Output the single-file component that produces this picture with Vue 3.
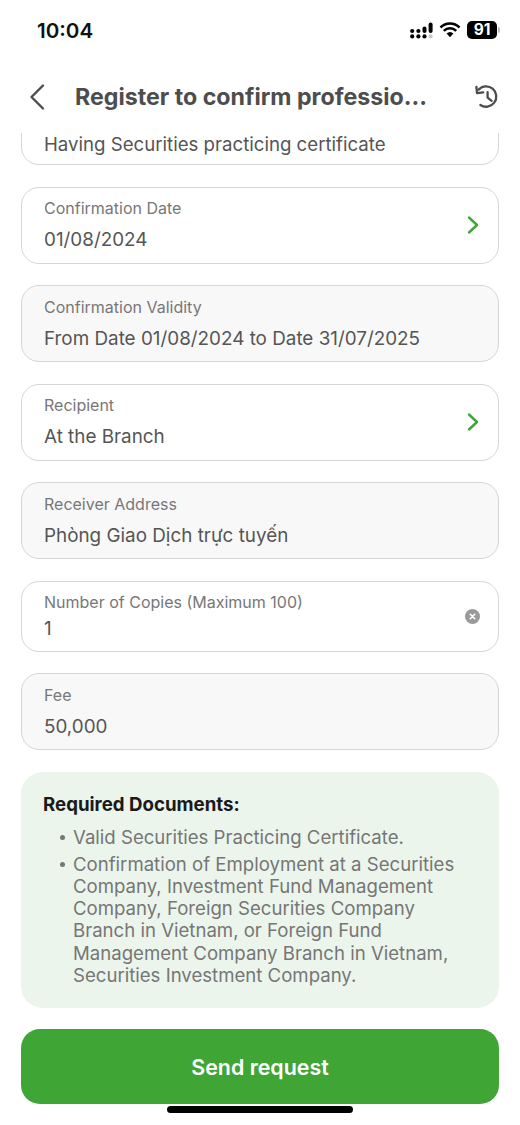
<script setup>
const fields = [
  { value: 'Having Securities practicing certificate', arrow: true, scrolled: true },
  { label: 'Confirmation Date', value: '01/08/2024', arrow: true },
  { label: 'Confirmation Validity', value: 'From Date 01/08/2024 to Date 31/07/2025', readonly: true },
  { label: 'Recipient', value: 'At the Branch', arrow: true },
  { label: 'Receiver Address', value: 'Phòng Giao Dịch trực tuyến', readonly: true },
  { label: 'Number of Copies (Maximum 100)', value: '1', clear: true, compact: true },
  { label: 'Fee', value: '50,000', readonly: true },
]
</script>

<template>
  <div class="screen">
    <div class="status">
      <span class="time">10:04</span>
      <div class="status-icons">
        <svg width="23" height="17" viewBox="0 0 23 17">
          <g fill="#000">
            <circle cx="2.2" cy="9" r="2.1" /><circle cx="2.2" cy="14.4" r="2.1" />
            <circle cx="8.4" cy="9" r="2.1" /><circle cx="8.4" cy="14.4" r="2.1" />
            <rect x="12.5" y="4.6" width="4" height="6.4" rx="2" /><circle cx="14.5" cy="14.4" r="2.1" />
            <rect x="18.6" y="0.4" width="4" height="10.6" rx="2" />
          </g>
          <circle cx="20.6" cy="14.4" r="2.1" fill="#c8c8c8" />
        </svg>
        <svg width="22" height="16" viewBox="0 0 22 16">
          <path d="M1.5 5.5a13.5 13.5 0 0 1 19 0M4.8 8.9a8.8 8.8 0 0 1 12.4 0" fill="none" stroke="#000" stroke-width="2.5" />
          <path d="M7.6 11.6a4.6 4.6 0 0 1 6.8 0L11 15.2z" fill="#000" />
        </svg>
        <div class="battery"><span>91</span></div>
        <i class="battery-cap"></i>
      </div>
    </div>

    <header class="nav">
      <button type="button" class="nav-btn" aria-label="Back">
        <svg width="18" height="28" viewBox="0 0 18 28">
          <path d="M15 2.5 3.5 14 15 25.5" fill="none" stroke="#4d4d4d" stroke-width="2.4" stroke-linecap="round" stroke-linejoin="round" />
        </svg>
      </button>
      <h1 class="nav-title">Register to confirm professio...</h1>
      <button type="button" class="nav-btn" aria-label="History">
        <svg width="26" height="26" viewBox="0 0 26 26">
          <g fill="none" stroke="#4d4d4d" stroke-width="2.3" stroke-linecap="round" stroke-linejoin="round">
            <path d="M4.6 5.6A10.2 10.2 0 1 1 6.4 21" />
            <path d="M2.4 2.8 3 9.2l6.2-.9" />
            <path d="M13.6 8.2v5.4l4 3.2" />
          </g>
        </svg>
      </button>
    </header>

    <main class="content">
      <div class="form">
        <div
          v-for="f in fields"
          :key="f.value"
          class="field"
          :class="{ 'is-readonly': f.readonly, 'is-compact': f.compact, 'is-scrolled': f.scrolled }"
        >
          <div class="field-text">
            <div v-if="f.label" class="field-label">{{ f.label }}</div>
            <div class="field-value">{{ f.value }}</div>
          </div>
          <svg v-if="f.arrow" class="chevron" width="14" height="20" viewBox="0 0 14 20">
            <path d="M3 2.5 11 10l-8 7.5" fill="none" stroke="#3fa535" stroke-width="2.4" stroke-linecap="round" stroke-linejoin="round" />
          </svg>
          <svg v-if="f.clear" class="clear" width="15" height="15" viewBox="0 0 15 15">
            <circle cx="7.5" cy="7.5" r="7.5" fill="#9a9a9a" />
            <path d="M5.3 5.3l4.4 4.4m0-4.4-4.4 4.4" stroke="#fff" stroke-width="1.6" stroke-linecap="round" />
          </svg>
        </div>

        <section class="docs">
          <h2 class="docs-title">Required Documents:</h2>
          <ul class="docs-list">
            <li>Valid Securities Practicing Certificate.</li>
            <li>Confirmation of Employment at a Securities Company, Investment Fund Management Company, Foreign Securities Company Branch in Vietnam, or Foreign Fund Management Company Branch in Vietnam, Securities Investment Company.</li>
          </ul>
        </section>

        <button type="button" class="send">Send request</button>
      </div>
    </main>

    <div class="home-bar"></div>
  </div>
</template>

<style>
html,
body {
  margin: 0;
  background: #fff;
}
</style>

<style scoped>
.screen {
  position: relative;
  width: 520px;
  height: 1125px;
  display: flex;
  flex-direction: column;
  overflow: hidden;
  background: #fff;
  font-family: Inter, 'Liberation Sans', sans-serif;
}

.status {
  height: 60px;
  flex: none;
  display: flex;
  align-items: center;
  justify-content: space-between;
  padding: 0 20px 0 37px;
  box-sizing: border-box;
}

.time {
  font-size: 20.6px;
  font-weight: 600;
  color: #111;
}

.status-icons {
  display: flex;
  align-items: center;
  gap: 6px;
}

.battery {
  width: 30px;
  height: 18px;
  display: grid;
  place-items: center;
  background: #000;
  border-radius: 5px;
  color: #fff;
  font-size: 15.5px;
  font-weight: 700;
  line-height: 1;
}

.battery-cap {
  width: 2px;
  height: 6px;
  margin-left: -5px;
  background: #bbb;
  border-radius: 0 2px 2px 0;
}

.nav {
  height: 73px;
  flex: none;
  display: flex;
  align-items: center;
  gap: 29px;
  padding: 0 20px 0 28px;
  box-sizing: border-box;
}

.nav-btn {
  padding: 0;
  display: grid;
  place-items: center;
  background: none;
  border: none;
}

.nav-title {
  flex: 1;
  margin: 0;
  font-size: 23.2px;
  font-weight: 700;
  color: #4d4d4d;
  white-space: nowrap;
}

.content {
  flex: 1;
  min-height: 0;
  overflow: hidden;
  padding-top: 2px;
  box-sizing: border-box;
}

.form {
  margin-top: -47px;
  padding: 0 21px;
  display: flex;
  flex-direction: column;
  gap: 21.5px;
}

.field {
  height: 77px;
  flex: none;
  display: flex;
  align-items: center;
  justify-content: space-between;
  padding: 0 22px;
  box-sizing: border-box;
  background: #fff;
  border: 1.5px solid #d6d6d6;
  border-radius: 18px;
}

.field.is-readonly {
  background: #f8f8f8;
}

.field.is-compact {
  height: 71px;
}

.field.is-scrolled {
  align-items: flex-end;
  padding-bottom: 7.5px;
}

.field-label {
  font-size: 16px;
  line-height: 22px;
  color: #777;
}

.field-value {
  margin-top: 8px;
  font-size: 18.85px;
  line-height: 26px;
  color: #555;
}

.is-compact .field-value {
  margin-top: 3px;
}

.is-scrolled .field-value {
  margin-top: 0;
  font-size: 18.65px;
}

.chevron {
  align-self: center;
  margin-right: -4px;
}

.clear {
  margin-right: -4px;
}

.docs {
  height: 236px;
  flex: none;
  padding: 21px 22px 0;
  box-sizing: border-box;
  background: #ebf5eb;
  border-radius: 22px;
}

.docs-title {
  margin: 0;
  font-size: 18.67px;
  line-height: 24px;
  font-weight: 700;
  color: #1a1a1a;
}

.docs-list {
  margin: 9px 0 0;
  padding: 0 0 0 17px;
  list-style: none;
  font-size: 18.6px;
  line-height: 22.2px;
  color: #767676;
}

.docs-list li {
  display: flex;
  gap: 8px;
}

.docs-list li::before {
  content: '';
  flex: none;
  width: 5px;
  height: 5px;
  margin-top: 9px;
  border-radius: 50%;
  background: #767676;
}

.docs-list li + li {
  margin-top: 5px;
}

.send {
  height: 75px;
  flex: none;
  background: #3fa535;
  border: none;
  border-radius: 19px;
  color: #fff;
  font-family: inherit;
  font-size: 21.4px;
  font-weight: 600;
}

.home-bar {
  position: absolute;
  left: 167px;
  top: 1106px;
  width: 186px;
  height: 7px;
  background: #000;
  border-radius: 4px;
}
</style>
